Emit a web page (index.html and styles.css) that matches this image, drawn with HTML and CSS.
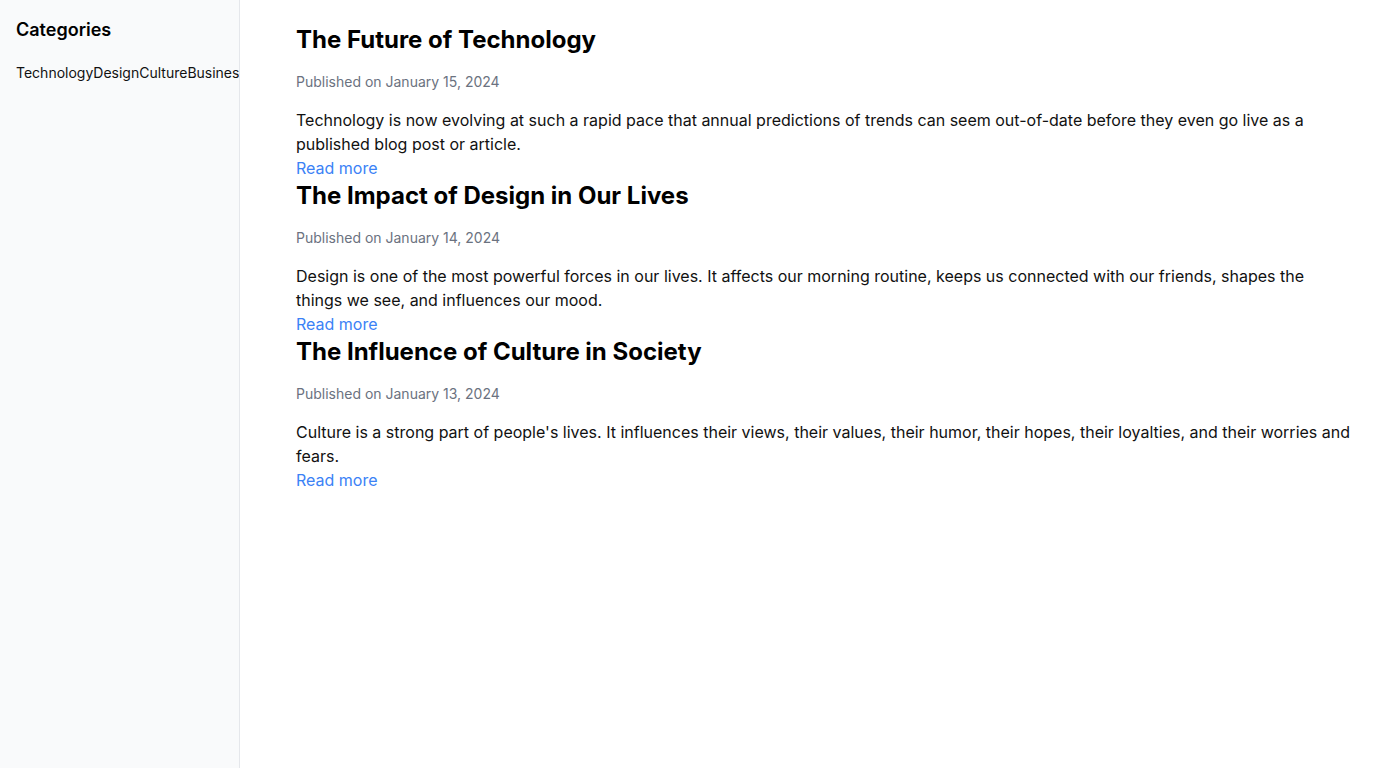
FILE: index.html
```html
<!DOCTYPE html>
<html lang="en">
<head>
<meta charset="utf-8">
<title>Blog</title>
<link rel="stylesheet" href="styles.css">
</head>
<body>
<div class="layout">
  <aside class="sidebar">
    <h2 class="side-title">Categories</h2>
    <nav class="cats">
      <a href="#">Technology</a><a href="#">Design</a><a href="#">Culture</a><a href="#">Business</a>
    </nav>
  </aside>
  <main class="main">
    <article class="post">
      <h1 class="post-title">The Future of Technology</h1>
      <p class="post-date">Published on January 15, 2024</p>
      <p class="post-body">Technology is now evolving at such a rapid pace that annual predictions of trends can seem out-of-date before they even go live as a published blog post or article.</p>
      <a class="read-more" href="#">Read more</a>
    </article>
    <article class="post">
      <h1 class="post-title">The Impact of Design in Our Lives</h1>
      <p class="post-date">Published on January 14, 2024</p>
      <p class="post-body">Design is one of the most powerful forces in our lives. It affects our morning routine, keeps us connected with our friends, shapes the things we see, and influences our mood.</p>
      <a class="read-more" href="#">Read more</a>
    </article>
    <article class="post">
      <h1 class="post-title">The Influence of Culture in Society</h1>
      <p class="post-date">Published on January 13, 2024</p>
      <p class="post-body">Culture is a strong part of people's lives. It influences their views, their values, their humor, their hopes, their loyalties, and their worries and fears.</p>
      <a class="read-more" href="#">Read more</a>
    </article>
  </main>
</div>
</body>
</html>
```
FILE: styles.css
```css
* { box-sizing: border-box; }
html, body { margin: 0; padding: 0; }
body {
  font-family: Inter, "Noto Sans", sans-serif;
  color: #111827;
  background: #fff;
}
.layout {
  display: flex;
  min-height: 768px;
}
.sidebar {
  width: 240px;
  flex: 0 0 240px;
  background: #f9fafb;
  border-right: 1px solid #e5e7eb;
  padding: 16px;
  overflow: hidden;
}
.side-title {
  margin: 0 0 16px;
  font-size: 18px;
  line-height: 28px;
  font-weight: 600;
  color: #000;
}
.cats {
  display: flex;
  white-space: nowrap;
  font-size: 14px;
  line-height: 20px;
  padding-top: 3px;
}
.cats a {
  color: #111;
  text-decoration: none;
}
.main {
  flex: 1;
  padding: 24px 24px 24px 56px;
}
.post { display: flex; flex-direction: column; align-items: flex-start; }
.post-title {
  margin: 0 0 16px;
  font-size: 24px;
  line-height: 32px;
  font-weight: 700;
  color: #000;
}
.post-date {
  margin: 0 0 16px;
  font-size: 14px;
  line-height: 20px;
  color: #6b7280;
}
.post-body {
  margin: 0;
  font-size: 16px;
  line-height: 24px;
  color: #111;
}
.read-more {
  font-size: 16px;
  line-height: 24px;
  color: #3b82f6;
  text-decoration: none;
}
```
